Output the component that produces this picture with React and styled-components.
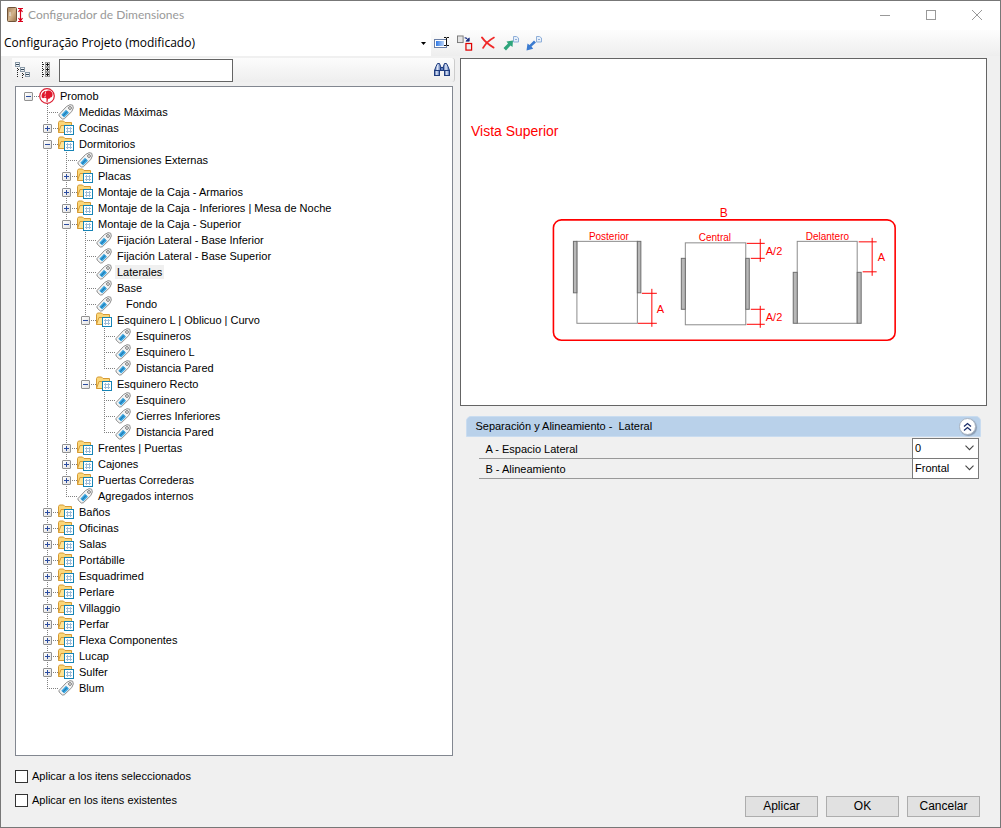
import React, { useState } from "react";
import styled, { createGlobalStyle } from "styled-components";

const GlobalStyle = createGlobalStyle`
  *, *::before, *::after { box-sizing: border-box; }
  body {
    margin: 0;
    background: #f0f0f0;
    color: #000;
    font: 11px/16px "Liberation Sans", Arial, sans-serif;
  }
  button, input, select { font: inherit; color: inherit; margin: 0; }
`;

const Window = styled.div`
  display: flex;
  flex-direction: column;
  min-height: 100vh;
  border: 1px solid #777;
  background: #f0f0f0;
`;

const TitleBar = styled.header`
  display: flex;
  align-items: center;
  height: 29px;
  padding: 0 0 2px 5px;
  background: #fff;
`;

const Title = styled.h1`
  flex: 1;
  margin: 0 0 0 4px;
  color: #999;
  font: 12px/16px Lato, sans-serif;
`;

const CaptionButton = styled.button`
  display: flex;
  align-items: center;
  justify-content: center;
  width: 46px;
  height: 27px;
  padding: 0;
  border: 0;
  background: none;
`;

const ProfileBar = styled.div`
  display: flex;
  align-items: center;
  height: 26px;
  background: linear-gradient(#fdfdfd, #eee);
`;

const ProfileSelect = styled.select`
  width: 43%;
  height: 26px;
  padding: 0 24px 0 3px;
  border: 0;
  appearance: none;
  background: #fff
    url("data:image/svg+xml,%3Csvg xmlns='http://www.w3.org/2000/svg' width='5' height='3'%3E%3Cpath d='M0 0h5L2.5 3z'/%3E%3C/svg%3E")
    no-repeat right 5px center;
  font: 12px/16px "Open Sans", sans-serif;
`;

const Tools = styled.div`
  display: flex;
  gap: 7px;
  padding-left: 3px;
`;

const IconButton = styled.button`
  display: flex;
  align-items: center;
  justify-content: center;
  width: 16px;
  height: 16px;
  padding: 0;
  border: 0;
  background: none;
`;

const Main = styled.main`
  flex: 1;
  display: grid;
  grid-template-columns: minmax(0, 16fr) minmax(0, 19fr);
  gap: 5px;
  padding: 2px 13px 0 11px;
`;

const TreePane = styled.section`
  display: flex;
  flex-direction: column;
`;

const SearchBar = styled.div`
  display: flex;
  align-items: center;
  gap: 6px;
  height: 24px;
  margin-bottom: 4px;
  padding: 0 4px 0 3px;
  border-right: 1px solid #ccc;
  border-radius: 0 3px 3px 0;
  background: linear-gradient(#fcfcfc, #eee);
`;

const SearchInput = styled.input`
  width: 174px;
  height: 23px;
  padding: 0 4px;
  border: 1px solid #646464;
  background: #fff;
`;

const Spacer = styled.span`
  flex: 1;
`;

const TreeBox = styled.div`
  flex: 1;
  margin: 0 2px 0 3px;
  padding: 1px 8px;
  border: 1px solid #828790;
  background: #fff;
`;

const Branch = styled.ul`
  margin: 0 0 0 ${(p) => (p.$root ? 0 : 19)}px;
  padding: 0;
  list-style: none;
`;

const Item = styled.li`
  background: ${(p) =>
    p.$root
      ? "none"
      : "linear-gradient(#808080 50%, transparent 50%) 4px 0 / 1px 2px repeat-y"};
  &:last-child {
    background: ${(p) =>
      p.$root
        ? "none"
        : "linear-gradient(#fff, #fff) 4px 9px / 1px 100% no-repeat, linear-gradient(#808080 50%, transparent 50%) 4px 0 / 1px 2px repeat-y"};
  }
`;

const Row = styled.div`
  display: flex;
  align-items: center;
  height: 16px;
`;

const Stem = styled.span`
  display: flex;
  align-items: center;
  width: 15px;
  height: 16px;
  background: linear-gradient(90deg, #808080 50%, transparent 50%) 4px 8px / 2px 1px repeat-x;
  background-clip: content-box;
  background-origin: content-box;
  padding-left: ${(p) => (p.$leaf ? 4 : 0)}px;
`;

const Toggle = styled.button`
  display: flex;
  width: 9px;
  height: 9px;
  padding: 0;
  border: 1px solid #919191;
  border-radius: 1px;
  background: linear-gradient(135deg, #fff, #e2e2e2);
`;

const Label = styled.span`
  margin-left: 3px;
  padding: 0 2px 0 ${(p) => (p.$indented ? 11 : 2)}px;
  background: ${(p) => (p.$selected ? "#f0f0f0" : "transparent")};
  line-height: 14px;
  white-space: nowrap;
`;

const DetailPane = styled.section`
  display: flex;
  flex-direction: column;
  gap: 10px;
`;

const Preview = styled.figure`
  margin: 0;
  border: 1px solid #646464;
  background: #fff;
  svg { display: block; width: 100%; }
`;

const Group = styled.section`
  margin: 0 6px;
`;

const GroupHeader = styled.div`
  display: flex;
  align-items: center;
  justify-content: space-between;
  height: 21px;
  margin-bottom: 2px;
  padding: 0 4px 0 8px;
  border: 1px solid #c9dcf0;
  border-radius: 5px 5px 0 0;
  background: #b9d1ea;
`;

const GroupTitle = styled.h2`
  margin: 0;
  font: inherit;
  white-space: pre;
`;

const CollapseButton = styled.button`
  display: flex;
  align-items: center;
  justify-content: center;
  width: 17px;
  height: 17px;
  padding: 0;
  border: 1px solid #a9b4c2;
  border-radius: 50%;
  background: #fff;
  box-shadow: 1px 1px 1px #8a9bb0;
`;

const Field = styled.div`
  display: flex;
  align-items: flex-end;
  height: 20px;
  margin: 0 2px 0 13px;
  border-bottom: 1px solid #999;
`;

const FieldLabel = styled.label`
  flex: 1;
  padding-left: 6px;
  line-height: 18px;
`;

const FieldSelect = styled.select`
  width: 67px;
  height: 21px;
  margin-bottom: -1px;
  padding: 0 16px 1px 2px;
  border: 1px solid #7a7a7a;
  border-radius: 0;
  appearance: none;
  background: #fff
    url("data:image/svg+xml,%3Csvg xmlns='http://www.w3.org/2000/svg' width='9' height='6'%3E%3Cpath d='M.5 .7l4 4 4-4' fill='none' stroke='%23444' stroke-width='1.1'/%3E%3C/svg%3E")
    no-repeat right 4px center;
`;

const Footer = styled.footer`
  display: flex;
  justify-content: space-between;
  align-items: flex-end;
  padding: 8px 20px 10px 14px;
`;

const Checks = styled.div`
  margin-bottom: 5px;
`;

const CheckLabel = styled.label`
  display: flex;
  align-items: center;
  gap: 4px;
  height: 24px;
`;

const CheckBox = styled.input`
  width: 13px;
  height: 13px;
  border: 1px solid #333;
  appearance: none;
  background: #fff;
  &:checked { background: #333; box-shadow: inset 0 0 0 2px #fff; }
`;

const Actions = styled.div`
  display: flex;
  gap: 8px;
`;

const ActionButton = styled.button`
  width: 73px;
  height: 21px;
  padding: 0 0 1px;
  border: 1px solid #adadad;
  background: #e1e1e1;
  font-size: 12px;
`;

const AppIcon = () => (
  <svg width="18" height="16" viewBox="0 0 18 16">
    <defs>
      <linearGradient id="door" x2="1" y2="1">
        <stop offset="0" stopColor="#a5815c" />
        <stop offset=".5" stopColor="#d3b48c" />
        <stop offset="1" stopColor="#9a7249" />
      </linearGradient>
    </defs>
    <rect x="1.500" y=".5" width="9" height="14" rx="1" fill="url(#door)" stroke="#6f5338" />
    <path d="M4 5v4" stroke="#eee" />
    <path d="M12 1.500h5M12 14.500h5M14.500 2v12M12.500 5l2-3 2 3M12.500 11l2 3 2-3" fill="none" stroke="#d9001b" strokeWidth="1.200" />
  </svg>
);

const RenameIcon = () => (
  <svg width="16" height="16" viewBox="0 0 16 16">
    <defs>
      <linearGradient id="field" x2="1">
        <stop offset="0" stopColor="#2f78e4" />
        <stop offset="1" stopColor="#b9d3f7" />
      </linearGradient>
    </defs>
    <rect x=".5" y="4.500" width="12" height="8" fill="#fff" stroke="#6b7fa5" />
    <rect x="2" y="6" width="8" height="5" fill="url(#field)" />
    <path d="M10 2.500h2l.5.5.5-.5h2M10 10.500h2l.5-.5.5.5h2M12.500 3v7" fill="none" stroke="#111" />
  </svg>
);

const CopyToIcon = () => (
  <svg width="17" height="17" viewBox="0 0 17 17">
    <rect x=".5" y=".5" width="6" height="7" fill="#e4e4e4" stroke="#777" />
    <rect x="9.500" y="8.500" width="6" height="7" fill="#eee" stroke="#e00000" strokeWidth="1.300" />
    <path d="M8 2.500h2l2 2.500M13 2.500V6H9.500z" fill="#1a2f80" stroke="#1a2f80" strokeWidth=".8" />
  </svg>
);

const DeleteIcon = () => (
  <svg width="16" height="16" viewBox="0 0 16 16">
    <path d="M2 2.500c2.500 3.500 6.500 7 11.500 10" fill="none" stroke="#f02828" strokeWidth="2" strokeLinecap="round" />
    <path d="M14 2.500C9.500 5 5.500 8.500 3 13" fill="none" stroke="#f02828" strokeWidth="1.600" strokeLinecap="round" />
  </svg>
);

const SheetArrowIcon = ({ color, inward }) => (
  <svg width="16" height="16" viewBox="0 0 16 16">
    <path d="M10.500 1.500h3l2 1.500v4h-5z" fill="#e6effa" stroke="#8eaed8" />
    <path d="M12 4.500h2" stroke="#8eaed8" />
    {inward ? (
      <path d="M8 5.500l2 2-4.500 4 1.700 2.200L.5 15.500 1.500 8.500l2 1.500z" fill={color} />
    ) : (
      <path d="M.5 13l4.500-4.500-1.500-2 6.500-1-.5 6.500-2-1.500L3 15.500z" fill={color} />
    )}
  </svg>
);

const CollapseAllIcon = () => (
  <svg width="16" height="18" viewBox="0 0 16 18">
    {[[1, 1], [6, 6], [11, 11]].map(([x, y]) => (
      <g key={x}>
        <rect x={x - 0.5} y={y + 0.5} width="4" height="4" fill="#eef3f7" stroke="#8a9aa8" />
        <path d={`M${x} ${y + 2.5}h3`} stroke="#345" />
      </g>
    ))}
    <path d="M2.500 7v10M7.500 12v5M3 8.500h2M8 13.500h2" stroke="#222" strokeDasharray="1 1" />
  </svg>
);

const ExpandAllIcon = () => (
  <svg width="16" height="16" viewBox="0 0 16 16">
    <path d="M5.500 0v16M6 2.500h3M6 7.500h3M6 12.500h3" stroke="#222" strokeDasharray="1 1" />
    {[0, 5, 10].map((y) => (
      <g key={y}>
        <rect x="8.500" y={y + 0.5} width="4" height="4" fill="#eee" stroke="#999" />
        <path d={`M9 ${y + 2.5}h3M10.500 ${y + 1}v3`} stroke="#111" />
      </g>
    ))}
  </svg>
);

const BinocularsIcon = () => (
  <svg width="16" height="16" viewBox="0 0 16 16">
    <defs>
      <linearGradient id="lens" x2="1">
        <stop offset="0" stopColor="#34549a" />
        <stop offset=".45" stopColor="#dfe8f8" />
        <stop offset="1" stopColor="#3c5ca6" />
      </linearGradient>
    </defs>
    <path d="M3.500 1.500h2l1.500 4v3H.5l1.500-4z" fill="url(#lens)" stroke="#1f3c7e" />
    <path d="M10.500 1.500h2l1.500 3 1.500 4H9v-3z" fill="url(#lens)" stroke="#1f3c7e" />
    <path d="M6.500 5.500h3v3h-3z" fill="#5d7dbe" stroke="#1f3c7e" />
    <rect x=".5" y="8.500" width="5" height="5" fill="url(#lens)" stroke="#1f3c7e" />
    <rect x="10.500" y="8.500" width="5" height="5" fill="url(#lens)" stroke="#1f3c7e" />
  </svg>
);

const RootIcon = () => (
  <svg width="16" height="16" viewBox="0 0 16 16">
    <circle cx="8" cy="8" r="7.300" fill="#fff" stroke="#dc1f32" strokeWidth="1.200" />
    <path d="M7.500 14V10.500l-1.500-1-2 .8L2.800 9.500C2.300 8 2.700 6 3.700 4.700l2-1.700 1.300.3C8.500 2 11 2.300 12 3.500c1.300.8 1.800 2 1.500 3.300.2 1.500-.8 2.700-2.200 2.700l-1 1.200H9L8.500 14z" fill="#e0182d" />
    <path d="M6.700 3.500L6 6.500M5.500 8.500l1.500-.5" stroke="#fff" strokeWidth=".8" fill="none" />
  </svg>
);

const FolderIcon = () => (
  <svg width="16" height="16" viewBox="0 0 16 16">
    <path d="M.5 12.500v-10l1-1.500h4l1.500 1.500h6.500v3" fill="#fbd779" stroke="#d59a35" />
    <path d="M.5 12.500l2.500-7h11.500v7z" fill="#ffe394" stroke="#d59a35" />
    <rect x="6.500" y="5.500" width="9" height="9" fill="#fff" stroke="#1583b5" />
    <path d="M8 8.500h6M8 11.500h6M9.500 7v6M12.500 7v6" stroke="#9dbcd8" />
  </svg>
);

const TagIcon = () => (
  <svg width="16" height="16" viewBox="0 0 16 16">
    <path d="M1 10.500L8.500 2.500l3.500-1.800 2.700.5.600 2.800-1.500 3.500-7.500 7.300-2 .2-3.200-3z" fill="#f4f4f4" stroke="#8d8d8d" />
    <circle cx="12" cy="4" r="1.400" fill="#fff" stroke="#777" />
    <path d="M3.300 10.800l4.700-5 3 2.900-4.800 4.800z" fill="#3aa6e0" />
    <path d="M5 11.800l4-4.300" stroke="#17679f" />
  </svg>
);

const TreeIcon = ({ kind }) =>
  kind === "root" ? <RootIcon /> : kind === "tag" ? <TagIcon /> : <FolderIcon />;

const tag = (name, extra) => ({ name, kind: "tag", ...extra });
const folder = (name, children) => ({ name, kind: "folder", children });

const tree = {
  name: "Promob",
  kind: "root",
  children: [
    tag("Medidas Máximas"),
    folder("Cocinas"),
    folder("Dormitorios", [
      tag("Dimensiones Externas"),
      folder("Placas"),
      folder("Montaje de la Caja - Armarios"),
      folder("Montaje de la Caja - Inferiores | Mesa de Noche"),
      folder("Montaje de la Caja - Superior", [
        tag("Fijación Lateral - Base Inferior"),
        tag("Fijación Lateral - Base Superior"),
        tag("Laterales", { selected: true }),
        tag("Base"),
        tag("Fondo", { indented: true }),
        folder("Esquinero L | Oblicuo | Curvo", [
          tag("Esquineros"),
          tag("Esquinero L"),
          tag("Distancia Pared"),
        ]),
        folder("Esquinero Recto", [
          tag("Esquinero"),
          tag("Cierres Inferiores"),
          tag("Distancia Pared"),
        ]),
      ]),
      folder("Frentes | Puertas"),
      folder("Cajones"),
      folder("Puertas Correderas"),
      tag("Agregados internos"),
    ]),
    ...[
      "Baños", "Oficinas", "Salas", "Portábille", "Esquadrimed", "Perlare",
      "Villaggio", "Perfar", "Flexa Componentes", "Lucap", "Sulfer",
    ].map((name) => folder(name)),
    tag("Blum"),
  ],
};

function TreeNode({ node, root }) {
  const [open, setOpen] = useState(Boolean(node.children));
  const leaf = node.kind === "tag";
  return (
    <Item $root={root}>
      <Row>
        <Stem $leaf={leaf}>
          {!leaf && (
            <Toggle type="button" aria-label={node.name} aria-expanded={open} onClick={() => setOpen(!open)}>
              <svg width="7" height="7" viewBox="0 0 7 7">
                <path d={open ? "M1 3.5h5" : "M1 3.5h5M3.5 1v5"} stroke="#2b4ca0" />
              </svg>
            </Toggle>
          )}
        </Stem>
        <TreeIcon kind={node.kind} />
        <Label $selected={node.selected} $indented={node.indented}>{node.name}</Label>
      </Row>
      {open && node.children && (
        <Branch>
          {node.children.map((child) => (
            <TreeNode key={child.name} node={child} />
          ))}
        </Branch>
      )}
    </Item>
  );
}

const Drawing = () => (
  <svg viewBox="461 59 525 346" role="img" aria-label="Vista Superior">
    <g fill="#fff" stroke="#8c8c8c">
      <rect x="577" y="241.500" width="60.500" height="82" />
      <rect x="685.500" y="243" width="60.500" height="82" />
      <rect x="797.500" y="241.500" width="60" height="82" />
    </g>
    <g fill="#b8b8b8" stroke="#6e6e6e">
      <rect x="573.500" y="241.500" width="3.500" height="51.500" />
      <rect x="637.500" y="241.500" width="3.500" height="51.500" />
      <rect x="681.500" y="258.500" width="4" height="51" />
      <rect x="746" y="258.500" width="3.500" height="51" />
      <rect x="793.500" y="272.500" width="4" height="51" />
      <rect x="857.500" y="272.500" width="4" height="51" />
    </g>
    <g fill="none" stroke="#ff0000">
      <rect x="553.500" y="220" width="342" height="120.500" rx="8" strokeWidth="1.600" />
      <path d="M642 293.500h15M638 323.500h19M652 289v38" />
      <path d="M747 243.500h18M751 258.500h14M760.500 239v23" />
      <path d="M751 309.500h14M747 324.500h18M760.500 306v22" />
      <path d="M859 242h18M863 272h14M872.500 238v38" />
    </g>
    <g fill="#ff0000" fontFamily="Liberation Sans, Arial, sans-serif">
      <text x="471" y="136" fontSize="14">Vista Superior</text>
      <text x="720" y="217" fontSize="12">B</text>
      <g fontSize="10">
        <text x="589" y="240">Posterior</text>
        <text x="699" y="241">Central</text>
        <text x="806" y="240">Delantero</text>
      </g>
      <g fontSize="11">
        <text x="657" y="313">A</text>
        <text x="766" y="255">A/2</text>
        <text x="766" y="321">A/2</text>
        <text x="878" y="261">A</text>
      </g>
    </g>
  </svg>
);

export default function App() {
  return (
    <Window>
      <GlobalStyle />
      <TitleBar>
        <AppIcon />
        <Title>Configurador de Dimensiones</Title>
        <CaptionButton type="button" aria-label="Minimizar">
          <svg width="10" height="10"><path d="M0 5.500h10" stroke="#999" /></svg>
        </CaptionButton>
        <CaptionButton type="button" aria-label="Maximizar">
          <svg width="10" height="10"><rect x=".5" y=".5" width="9" height="9" fill="none" stroke="#999" /></svg>
        </CaptionButton>
        <CaptionButton type="button" aria-label="Cerrar">
          <svg width="10" height="10"><path d="M0 0l10 10M10 0L0 10" stroke="#999" /></svg>
        </CaptionButton>
      </TitleBar>

      <ProfileBar>
        <ProfileSelect aria-label="Configuración" defaultValue="projeto">
          <option value="projeto">Configuração Projeto (modificado)</option>
        </ProfileSelect>
        <Tools>
          <IconButton type="button" aria-label="Renombrar"><RenameIcon /></IconButton>
          <IconButton type="button" aria-label="Copiar"><CopyToIcon /></IconButton>
          <IconButton type="button" aria-label="Eliminar"><DeleteIcon /></IconButton>
          <IconButton type="button" aria-label="Exportar"><SheetArrowIcon color="#2fa57c" /></IconButton>
          <IconButton type="button" aria-label="Importar"><SheetArrowIcon color="#3b7bd0" inward /></IconButton>
        </Tools>
      </ProfileBar>

      <Main>
        <TreePane>
          <SearchBar>
            <IconButton type="button" aria-label="Contraer todo"><CollapseAllIcon /></IconButton>
            <IconButton type="button" aria-label="Expandir todo"><ExpandAllIcon /></IconButton>
            <SearchInput type="text" aria-label="Buscar" />
            <Spacer />
            <IconButton type="button" aria-label="Buscar siguiente"><BinocularsIcon /></IconButton>
          </SearchBar>
          <TreeBox>
            <Branch $root>
              <TreeNode node={tree} root />
            </Branch>
          </TreeBox>
        </TreePane>

        <DetailPane>
          <Preview><Drawing /></Preview>
          <Group>
            <GroupHeader>
              <GroupTitle>{"Separación y Alineamiento -  Lateral"}</GroupTitle>
              <CollapseButton type="button" aria-label="Contraer">
                <svg width="9" height="9" viewBox="0 0 9 9">
                  <path d="M1 4.500l3.500-3 3.500 3M1 8.500l3.500-3 3.500 3" fill="none" stroke="#1c2f6b" strokeWidth="1.300" />
                </svg>
              </CollapseButton>
            </GroupHeader>
            <Field>
              <FieldLabel htmlFor="espacio">A - Espacio Lateral</FieldLabel>
              <FieldSelect id="espacio"><option>0</option></FieldSelect>
            </Field>
            <Field>
              <FieldLabel htmlFor="alineamiento">B - Alineamiento</FieldLabel>
              <FieldSelect id="alineamiento"><option>Frontal</option></FieldSelect>
            </Field>
          </Group>
        </DetailPane>
      </Main>

      <Footer>
        <Checks>
          <CheckLabel><CheckBox type="checkbox" />Aplicar a los itens seleccionados</CheckLabel>
          <CheckLabel><CheckBox type="checkbox" />Aplicar en los itens existentes</CheckLabel>
        </Checks>
        <Actions>
          <ActionButton type="button">Aplicar</ActionButton>
          <ActionButton type="button">OK</ActionButton>
          <ActionButton type="button">Cancelar</ActionButton>
        </Actions>
      </Footer>
    </Window>
  );
}
